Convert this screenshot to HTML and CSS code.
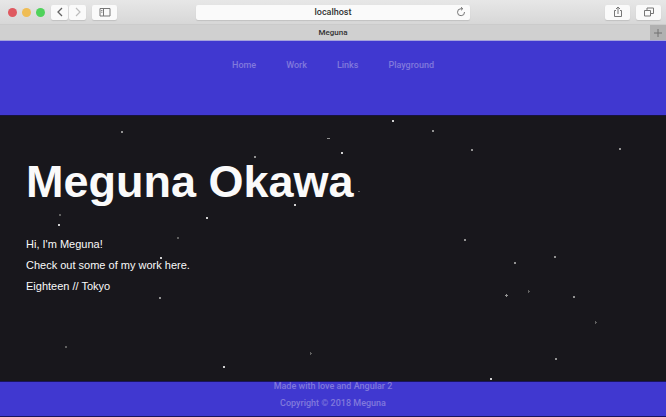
FILE: index.html
```html
<!DOCTYPE html>
<html lang="en">
<head>
<meta charset="utf-8">
<meta name="viewport" content="width=device-width, initial-scale=1">
<title>Meguna</title>
<link rel="stylesheet" href="styles.css">
</head>
<body>
<div class="toolbar">
  <div class="toolbar-side">
    <span class="lights"><i class="light close"></i><i class="light minimise"></i><i class="light expand"></i></span>
    <span class="pair">
      <button class="tool narrow" aria-label="Back"><svg width="12" height="12" viewBox="0 0 12 12"><path d="M8 2 4 6l4 4" stroke="#626262" stroke-width="1.3"/></svg></button>
      <button class="tool narrow" aria-label="Forward"><svg width="12" height="12" viewBox="0 0 12 12"><path d="m4 2 4 4-4 4" stroke="#bdbdbd" stroke-width="1.2"/></svg></button>
    </span>
    <button class="tool" aria-label="Sidebar"><svg width="12" height="12" viewBox="0 0 12 12"><path d="M1 2.500h10v7.500H1zM4.500 2.500V10M2.200 4.500h1.200M2.200 6.200h1.200" stroke="#777"/></svg></button>
  </div>
  <div class="address">
    <input type="text" value="localhost" aria-label="Address">
    <button class="reload" aria-label="Reload"><svg width="10" height="10" viewBox="0 0 10 10"><path d="M8.500 5A3.500 3.500 0 1 1 5 1.700h1.500M5 .2l1.800 1.500L5 3.300" stroke="#777"/></svg></button>
  </div>
  <div class="toolbar-side end">
    <button class="tool" aria-label="Share"><svg width="12" height="12" viewBox="0 0 12 12"><path d="M4 4.500H2.500v6h7v-6H8M6 8V1M4 3l2-2 2 2" stroke="#777"/></svg></button>
    <button class="tool" aria-label="Show tabs"><svg width="12" height="12" viewBox="0 0 12 12"><path d="M1.500 4.500h6v5.500h-6zM4 4.500V2h6.500v5.500h-3" stroke="#777"/></svg></button>
  </div>
</div>
<div class="tabs">
  <span class="tab">Meguna</span>
  <button class="new-tab" aria-label="New tab"><svg width="8" height="8" viewBox="0 0 8 8"><path d="M4 0v8M0 4h8" stroke="#707070"/></svg></button>
</div>
<header class="site-header">
  <nav class="nav">
    <a href="#home">Home</a>
    <a href="#work">Work</a>
    <a href="#links">Links</a>
    <a href="#playground">Playground</a>
  </nav>
</header>
<main class="hero">
  <svg class="stars" aria-hidden="true">
    <g fill="#d0d0d0">
      <rect x="392" y="4" width="2" height="2"/><rect x="341" y="36" width="2" height="2"/>
      <rect x="294" y="88" width="2" height="2"/><rect x="206" y="101" width="2" height="2"/>
      <rect x="58" y="108" width="2" height="2"/><rect x="160" y="141" width="2" height="2"/>
      <rect x="223" y="250" width="2" height="2"/><rect x="490" y="262" width="2" height="2"/>
    </g>
    <g fill="#929292">
      <rect x="121" y="15" width="2" height="2"/><rect x="327" y="22" width="3" height="1"/>
      <rect x="254" y="40" width="2" height="2"/><rect x="432" y="14" width="2" height="2"/>
      <rect x="471" y="33" width="2" height="2"/><rect x="619" y="32" width="2" height="2"/>
      <rect x="159" y="181" width="2" height="2"/><rect x="464" y="123" width="2" height="2"/>
      <rect x="514" y="146" width="2" height="2"/><rect x="554" y="140" width="2" height="2"/>
      <rect x="506" y="178" width="1" height="3"/><rect x="505" y="179" width="3" height="1"/>
      <rect x="573" y="180" width="2" height="2"/><rect x="555" y="242" width="2" height="2"/>
    </g>
    <g fill="#606060">
      <rect x="358" y="75" width="2" height="1"/><rect x="59" y="98" width="2" height="2"/>
      <rect x="177" y="121" width="2" height="2"/><rect x="528" y="174" width="1" height="3"/>
      <rect x="529" y="175" width="1" height="1"/><rect x="65" y="230" width="2" height="2"/>
      <rect x="310" y="236" width="1" height="3"/><rect x="311" y="237" width="1" height="1"/>
      <rect x="595" y="205" width="1" height="3"/><rect x="596" y="206" width="1" height="1"/>
    </g>
  </svg>
  <h1>Meguna Okawa</h1>
  <p>Hi, I'm Meguna!</p>
  <p>Check out some of my work here.</p>
  <p>Eighteen // Tokyo</p>
</main>
<footer class="site-footer">
  <p>Made with love and Angular 2</p>
  <p>Copyright © 2018 Meguna</p>
</footer>
</body>
</html>
```
FILE: styles.css
```css
* {
  box-sizing: border-box;
}

body {
  display: flex;
  flex-direction: column;
  min-height: 100vh;
  margin: 0;
  background: #18171c;
  color: #fafafa;
  font-family: Roboto, "Liberation Sans", sans-serif;
  font-size: 9px;
  font-weight: 500;
}

h1,
p {
  margin: 0;
}

button {
  display: flex;
  align-items: center;
  justify-content: center;
  padding: 0;
  border: 0;
  background: none;
}

svg {
  fill: none;
}

.toolbar {
  display: grid;
  grid-template-columns: 1fr 41% 1fr;
  align-items: center;
  height: 25px;
  border-bottom: 1px solid #cbcbcb;
  background: linear-gradient(#e7e7e7, #d7d7d7);
}

.toolbar-side {
  display: flex;
  align-items: center;
  gap: 6px;
  padding: 0 5px 0 8px;
}

.end {
  justify-content: flex-end;
}

.lights {
  display: flex;
  gap: 5px;
}

.light {
  width: 9px;
  height: 9px;
  border-radius: 50%;
}

.close {
  background: #df5960;
}

.minimise {
  background: #efbd55;
}

.expand {
  background: #4fd25b;
}

.pair {
  display: flex;
  gap: 1px;
}

.tool {
  width: 25px;
  height: 15px;
  border-radius: 2px;
  background: #fafafa;
  box-shadow: 0 1px 1px #c0c0c0;
}

.narrow {
  width: 17px;
}

.address {
  display: flex;
  position: relative;
}

.address input {
  width: 100%;
  height: 15px;
  padding: 0;
  border: 0;
  border-radius: 2px;
  background: #fafafa;
  box-shadow: 0 1px 1px #c0c0c0;
  color: #333;
  font: inherit;
  text-align: center;
}

.reload {
  position: absolute;
  top: 0;
  right: 3px;
  width: 11px;
  height: 15px;
}

.tabs {
  display: flex;
  height: 16px;
  border-bottom: 1px solid #a5a2dc;
  background: #d0d0d0;
}

.tab {
  flex: 1;
  padding-left: 16px;
  color: #333;
  font-size: 8px;
  line-height: 16px;
  text-align: center;
}

.new-tab {
  width: 16px;
  background: #b1b1b1;
}

.site-header {
  height: 74px;
  padding-top: 16px;
  background: #4038d0;
}

.nav {
  display: flex;
  justify-content: center;
  gap: 30px;
  line-height: 16px;
}

.nav a {
  color: #8079dc;
  text-decoration: none;
}

.hero {
  flex: 1;
  position: relative;
  padding: 39px 26px;
  border-top: 1px solid #17133f;
}

.stars {
  position: absolute;
  top: 0;
  left: 0;
  width: 100%;
  height: 100%;
}

.hero h1 {
  margin-bottom: 25px;
  font: bold 45px/54px "Liberation Sans", sans-serif;
}

.hero p {
  font: 11px/21px "Liberation Sans", sans-serif;
}

.site-footer {
  display: flex;
  flex-direction: column;
  gap: 9px;
  height: 36px;
  border: solid #19145e;
  border-width: 1px 0;
  background: #4038d0;
  color: #8079dc;
  line-height: 8px;
  text-align: center;
}
```
